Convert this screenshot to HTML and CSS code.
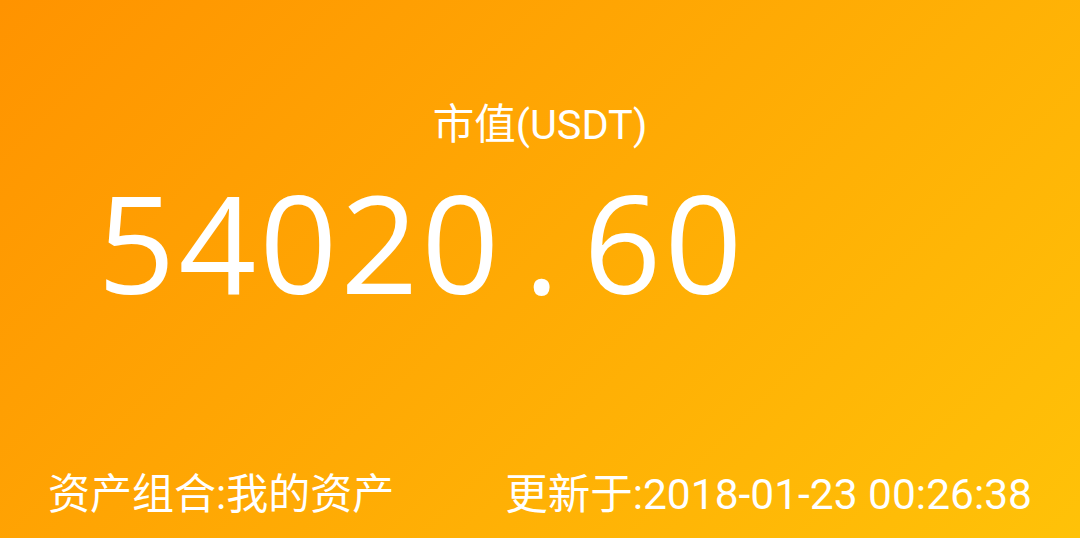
FILE: index.html
```html
<!DOCTYPE html>
<html lang="zh-CN">
<head>
<meta charset="utf-8">
<title>市值</title>
<link rel="stylesheet" href="styles.css">
</head>
<body>
<main class="screen">
  <h1 class="title">市值(USDT)</h1>
  <div class="value"><span class="ch">5</span><span class="ch">4</span><span class="ch">0</span><span class="ch">2</span><span class="ch">0</span><span class="ch">.</span><span class="ch">6</span><span class="ch">0</span></div>
  <footer class="meta">
    <span class="meta-item">资产组合:我的资产</span>
    <span class="meta-item meta-time">更新于:2018-01-23 00:26:38</span>
  </footer>
</main>
</body>
</html>
```

FILE: styles.css
```css
html, body {
  margin: 0;
  padding: 0;
}

body {
  width: 1080px;
  height: 538px;
  overflow: hidden;
  font-family: "Roboto", "Noto Sans CJK SC", sans-serif;
  color: #ffffff;
}

.screen {
  box-sizing: border-box;
  width: 1080px;
  height: 538px;
  display: flex;
  flex-direction: column;
  padding: 100px 48px 18px 48px;
  background: linear-gradient(135deg, #ff9300 0%, #ffc208 100%);
}

.title {
  margin: 0;
  font-size: 41.5px;
  line-height: 49px;
  font-weight: 400;
  text-align: center;
}

.value {
  margin: 25px 0 0 48px;
  display: flex;
  font-family: "Open Sans", "Noto Sans", sans-serif;
  font-size: 136px;
  line-height: 136px;
  font-weight: 400;
}

.ch {
  display: inline-block;
  width: 81px;
  text-align: center;
}

.meta {
  margin-top: auto;
  display: flex;
  justify-content: space-between;
  align-items: baseline;
  font-size: 42px;
  line-height: 50px;
}

.meta-time {
  font-size: 42.5px;
}
```
